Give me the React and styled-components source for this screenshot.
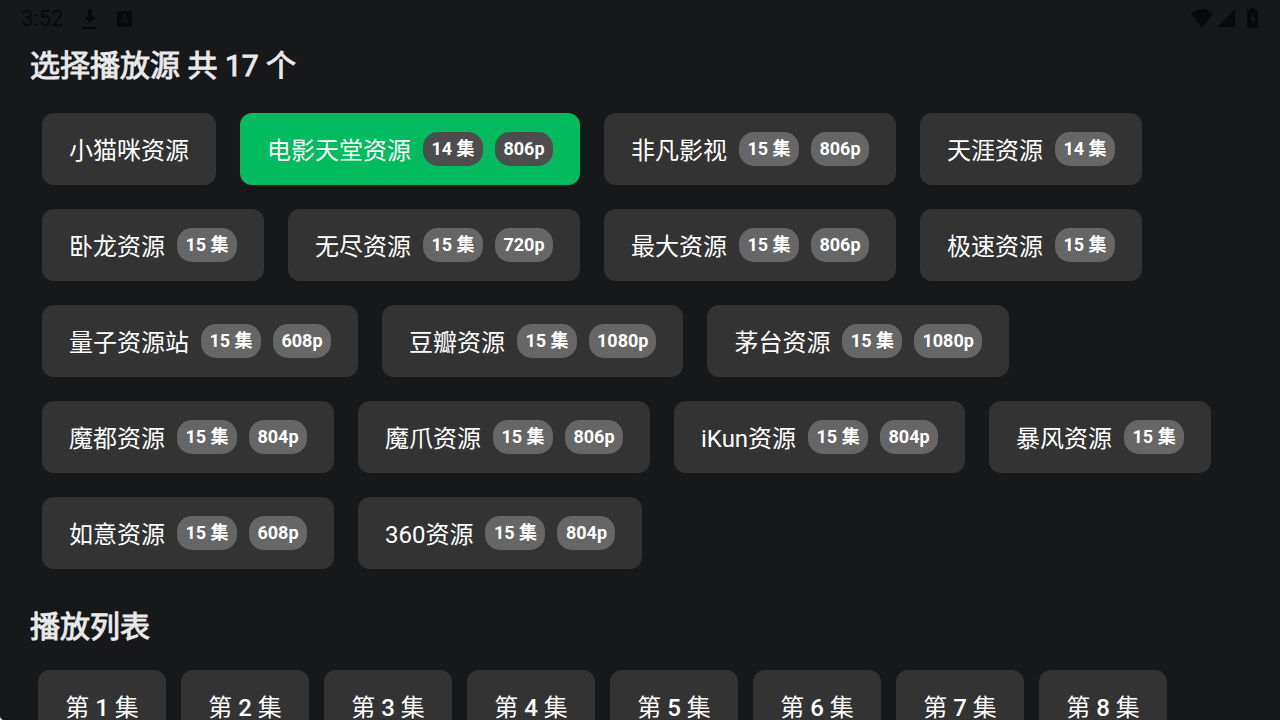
import React from "react";
import styled, { createGlobalStyle } from "styled-components";

const sources = [
  { name: "小猫咪资源" },
  { name: "电影天堂资源", count: 14, quality: "806p" },
  { name: "非凡影视", count: 15, quality: "806p" },
  { name: "天涯资源", count: 14 },
  { name: "卧龙资源", count: 15 },
  { name: "无尽资源", count: 15, quality: "720p" },
  { name: "最大资源", count: 15, quality: "806p" },
  { name: "极速资源", count: 15 },
  { name: "量子资源站", count: 15, quality: "608p" },
  { name: "豆瓣资源", count: 15, quality: "1080p" },
  { name: "茅台资源", count: 15, quality: "1080p" },
  { name: "魔都资源", count: 15, quality: "804p" },
  { name: "魔爪资源", count: 15, quality: "806p" },
  { name: "iKun资源", count: 15, quality: "804p" },
  { name: "暴风资源", count: 15 },
  { name: "如意资源", count: 15, quality: "608p" },
  { name: "360资源", count: 15, quality: "804p" },
];

const episodes = [1, 2, 3, 4, 5, 6, 7, 8];

function StatusBar() {
  return (
    <StatusBarWrapper>
      <StatusGroup>
        <Clock>3:52</Clock>
        <svg width="16" height="22" viewBox="0 0 16 22" fill="currentColor" aria-hidden="true">
          <path d="M6 1h4v8h4l-6 6-6-6h4zM0 19h15v2H0z" />
        </svg>
        <svg width="16" height="16" viewBox="0 0 16 16" aria-hidden="true">
          <path
            fill="currentColor"
            fillRule="evenodd"
            d="M2 0h11q2 0 2 2v12q0 2-2 2H2q-2 0-2-2V2Q0 0 2 0zM6.600 3 3.500 12h1.800l.6-2h3.200l.6 2h1.800L8.400 3zM6.400 8.500 7.500 5l1.100 3.500zM8 14h1v1H8zM10 14h1v1h-1zM12 14h1v1h-1z"
          />
        </svg>
      </StatusGroup>
      <StatusIcons>
        <svg width="22" height="19" viewBox="0 0 22 19" fill="currentColor" aria-hidden="true">
          <path d="M11 19 0 5Q5 0 11 0t11 5z" />
        </svg>
        <svg width="18" height="18" viewBox="0 0 18 18" fill="currentColor" aria-hidden="true">
          <path d="M18 0v18H0z" />
        </svg>
        <Battery width="11" height="20" viewBox="0 0 11 20" aria-hidden="true">
          <path
            fill="currentColor"
            fillRule="evenodd"
            d="M3 0h5v2h2q1 0 1 1v16q0 1-1 1H1q-1 0-1-1V3q0-1 1-1h2zM6.500 5 3 12h2v5l4-7H6.500z"
          />
        </Battery>
      </StatusIcons>
    </StatusBarWrapper>
  );
}

function SourceItem({ source, active, onSelect }) {
  return (
    <Chip type="button" $active={active} aria-pressed={active} onClick={onSelect}>
      <Label>{source.name}</Label>
      {source.count && <CountBadge $active={active}>{source.count} 集</CountBadge>}
      {source.quality && <Badge $active={active}>{source.quality}</Badge>}
    </Chip>
  );
}

function App() {
  const [current, setCurrent] = React.useState("电影天堂资源");

  return (
    <>
      <GlobalStyle />
      <StatusBar />
      <Main>
        <Heading>选择播放源 共 {sources.length} 个</Heading>
        <SourceList>
          {sources.map((source) => (
            <SourceItem
              key={source.name}
              source={source}
              active={source.name === current}
              onSelect={() => setCurrent(source.name)}
            />
          ))}
        </SourceList>
        <Heading>播放列表</Heading>
        <EpisodeList>
          {episodes.map((episode) => (
            <EpisodeChip type="button" key={episode}>
              <Label>
                第 <EpisodeNumber>{episode}</EpisodeNumber> 集
              </Label>
            </EpisodeChip>
          ))}
        </EpisodeList>
      </Main>
      <ScreenCorner width="3" height="3" viewBox="0 0 4 4" aria-hidden="true">
        <path fill="#ffffff" d="M0 0q1 3 4 4H0z" />
      </ScreenCorner>
    </>
  );
}

export default App;

const GlobalStyle = createGlobalStyle`
  * {
    box-sizing: border-box;
  }
  html {
    background: #17181a;
    scrollbar-width: none;
  }
  body {
    margin: 0;
    color: #e9e9eb;
    font-family: Roboto, "Noto Sans CJK SC", sans-serif;
  }
  button {
    font-family: inherit;
  }
`;

const StatusBarWrapper = styled.header`
  display: flex;
  justify-content: space-between;
  align-items: center;
  height: 36px;
  padding: 0 22px 0 21px;
  color: #08090b;
`;

const StatusGroup = styled.div`
  display: flex;
  align-items: center;
  gap: 19px;
  padding-top: 2px;
`;

const Clock = styled.span`
  font-size: 22px;
  line-height: 34px;
`;

const StatusIcons = styled.div`
  display: flex;
  align-items: center;
  gap: 4px;
`;

const Battery = styled.svg`
  margin-left: 8px;
`;

const Main = styled.main`
  padding-bottom: 24px;
`;

const Heading = styled.h2`
  margin: 0;
  padding: 8px 30px;
  font-size: 30px;
  font-weight: 400;
  line-height: 44px;
  -webkit-text-stroke: 1px currentColor;
`;

const SourceList = styled.div`
  display: flex;
  flex-wrap: wrap;
  gap: 24px;
  padding: 17px 42px 28px;
`;

const EpisodeList = styled.div`
  display: flex;
  flex-wrap: wrap;
  gap: 15px;
  padding: 13px 38px;
`;

const Chip = styled.button`
  display: flex;
  align-items: center;
  gap: 12px;
  height: 72px;
  padding: 0 27px;
  border: 0;
  border-radius: 12px;
  background: ${(props) => (props.$active ? "#02bb5e" : "#333333")};
  color: #ffffff;
  font-size: 24px;
  font-weight: 400;
  line-height: 36px;
  white-space: nowrap;
  cursor: pointer;
`;

const EpisodeChip = styled(Chip)`
  justify-content: center;
  min-width: 128px;
`;

const EpisodeNumber = styled.span`
  font-weight: 500;
`;

const Label = styled.span`
  padding-top: 4px;
`;

const Badge = styled.span`
  min-width: 58px;
  padding: 0 8px;
  border-radius: 15px;
  background: ${(props) => (props.$active ? "#4d4d4d" : "#666666")};
  font-size: 18px;
  font-weight: 700;
  line-height: 34px;
  text-align: center;
`;

const CountBadge = styled(Badge)`
  min-width: 60px;
`;

const ScreenCorner = styled.svg`
  position: fixed;
  bottom: 0;
  left: 0;
`;
